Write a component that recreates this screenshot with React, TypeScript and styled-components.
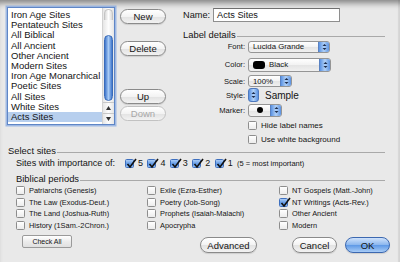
import React from 'react';
import styled, { createGlobalStyle } from 'styled-components';

const GlobalStyle = createGlobalStyle`
  html, body { margin: 0; padding: 0; background: #e9e9e9; }
  body { font-family: "Liberation Sans", Arial, sans-serif; color: #141414; }
`;

const Sheet = styled.div`
  width: 400px;
  height: 262px;
  overflow: hidden;
  background: #e9e9e9;
  box-shadow: inset 0 7px 6px -4px rgba(0, 0, 0, 0.45), inset -2px 0 0 #dcdcdc;
  display: flex;
  flex-direction: column;
`;

const TopSection = styled.div`
  display: flex;
  height: 145px;
  box-sizing: border-box;
  padding: 7px 0 0 7px;
`;

/* ---- site list ---- */
const ListBox = styled.div`
  width: 108px;
  height: 118px;
  box-sizing: border-box;
  border: 1px solid #5f86c6;
  box-shadow: 0 0 0 1.5px rgba(120, 160, 225, 0.65);
  background: #fff;
  display: flex;
`;

const ListItems = styled.div`
  flex: 1;
  padding-top: 2px;
`;

const ListItem = styled.div<{ $selected?: boolean }>`
  height: 10.2px;
  line-height: 10.2px;
  padding-left: 3px;
  font-size: 9.5px;
  white-space: nowrap;
  background: ${p => (p.$selected ? '#b7cfee' : 'transparent')};
`;

const ScrollBar = styled.div`
  width: 11px;
  border-left: 1px solid #d2d2d2;
  background: linear-gradient(to right, #e6e6e6, #fdfdfd 50%, #e6e6e6);
  display: flex;
  flex-direction: column;
`;

const TrackCap = styled.div`
  height: 10px;
  margin: 1px 1px 0;
  border-radius: 5px 5px 0 0;
  background: linear-gradient(to right, #d9d9d9, #fff 50%, #d9d9d9);
  border: 1px solid #c4c4c4;
  border-bottom: none;
`;

const Thumb = styled.div`
  height: 64px;
  margin: 15px 1px 0;
  border-radius: 5px;
  border: 1px solid #3a6bb8;
  background: linear-gradient(to right, #3f76cc, #a8cbf5 50%, #3f76cc);
`;

const ArrowBox = styled.div`
  height: 10px;
  display: flex;
  align-items: center;
  justify-content: center;
  border-top: 1px solid #c8c8c8;
`;

const Spacer = styled.div`
  flex: 1;
`;

/* ---- buttons ---- */
const ButtonColumn = styled.div`
  width: 46px;
  margin-left: 5px;
  display: flex;
  flex-direction: column;
`;

const PillButton = styled.button<{
  $w: number;
  $h?: number;
  $top?: number;
  $left?: number;
  $primary?: boolean;
}>`
  width: ${p => p.$w}px;
  height: ${p => p.$h ?? 15}px;
  margin-top: ${p => p.$top ?? 0}px;
  margin-left: ${p => p.$left ?? 0}px;
  padding: 0;
  border-radius: 9px;
  border: 1px solid ${p => (p.$primary ? '#3c68b0' : '#8a8a8a')};
  background: ${p =>
    p.$primary
      ? 'linear-gradient(#cfe2fb, #8ab6ee 50%, #5d98e6 51%, #a8ccf6)'
      : 'linear-gradient(#ffffff, #f3f3f3 50%, #e2e2e2 51%, #f2f2f2)'};
  font-family: "Liberation Sans", Arial, sans-serif;
  font-size: 9.5px;
  color: #141414;
  box-shadow: 0 1px 1px rgba(0, 0, 0, 0.12);
  &:disabled {
    color: #a8a8a8;
    border-color: #c2c2c2;
    box-shadow: none;
  }
`;

const SquareButton = styled.button`
  width: 50px;
  height: 13px;
  margin-left: 22px;
  padding: 0;
  border-radius: 2px;
  border: 1px solid #9a9a9a;
  background: linear-gradient(#ffffff, #ececec 50%, #e0e0e0);
  font-family: "Liberation Sans", Arial, sans-serif;
  font-size: 7px;
  color: #141414;
`;

/* ---- label details ---- */
const Details = styled.div`
  width: 202px;
  margin-left: 17px;
  display: flex;
  flex-direction: column;
`;

const NameRow = styled.div`
  display: flex;
  align-items: center;
  margin-top: 1px;
  font-size: 9.2px;
`;

const TextField = styled.div`
  width: 127px;
  height: 14px;
  box-sizing: border-box;
  margin-left: 3px;
  padding: 0 3px;
  border: 1px solid #8e8e8e;
  border-top-color: #6f6f6f;
  background: #fff;
  font-size: 9.2px;
  line-height: 12px;
`;

const Heading = styled.div<{ $indent?: number; $top?: number }>`
  display: flex;
  align-items: center;
  height: 10px;
  margin-top: ${p => p.$top ?? 0}px;
  padding-left: ${p => p.$indent ?? 0}px;
  font-size: 9.4px;
  white-space: nowrap;
  &::after {
    content: '';
    flex: 1;
    height: 1px;
    margin: 4px 0 0 1px;
    background: #a9a9a9;
  }
`;

const FormRow = styled.div<{ $h: number }>`
  display: flex;
  align-items: center;
  height: ${p => p.$h}px;
`;

const FormLabel = styled.div`
  width: 62px;
  margin-right: 3px;
  text-align: right;
  font-size: 7.6px;
`;

const Popup = styled.div<{ $w: number; $h: number }>`
  width: ${p => p.$w}px;
  height: ${p => p.$h}px;
  box-sizing: border-box;
  display: flex;
  align-items: center;
  border: 1px solid #959595;
  border-radius: 3px;
  background: linear-gradient(#ffffff, #f2f2f2 50%, #e4e4e4 51%, #f0f0f0);
  font-size: 7.8px;
  overflow: hidden;
`;

const PopupText = styled.div`
  flex: 1;
  display: flex;
  align-items: center;
  padding-left: 4px;
  white-space: nowrap;
`;

const Stepper = styled.div<{ $alone?: boolean }>`
  width: 10px;
  align-self: stretch;
  display: flex;
  align-items: center;
  justify-content: center;
  background: linear-gradient(to right, #5b93e3, #b1d1f7 50%, #5b93e3);
  border-left: 1px solid #5a82c2;
  ${p =>
    p.$alone &&
    `
    width: 9px;
    height: 12px;
    align-self: center;
    border: 1px solid #4d78bd;
    border-radius: 3px;
  `}
`;

const Swatch = styled.span`
  width: 12px;
  height: 8px;
  border-radius: 3px;
  background: #000;
  margin-right: 4px;
`;

const Dot = styled.span`
  width: 6px;
  height: 6px;
  border-radius: 50%;
  background: #000;
  margin-left: 4px;
`;

const SampleText = styled.span`
  margin-left: 6px;
  font-size: 10px;
`;

const CheckRow = styled.label`
  display: flex;
  align-items: center;
  font-size: 8px;
`;

const Box = styled.span<{ $checked?: boolean }>`
  position: relative;
  flex: none;
  width: 9px;
  height: 9px;
  box-sizing: border-box;
  border-radius: 1.5px;
  border: 1px solid ${p => (p.$checked ? '#3d6fbf' : '#8d8d8d')};
  background: ${p =>
    p.$checked
      ? 'linear-gradient(#a9cbf5, #5b95e4 60%, #8fbbf2)'
      : 'linear-gradient(#ffffff, #ececec)'};
  margin-right: 4px;
  svg {
    position: absolute;
    left: 0;
    top: -2px;
  }
`;

/* ---- select sites ---- */
const SelectSection = styled.div`
  display: flex;
  flex-direction: column;
  padding: 0 15px 0 8px;
`;

const ImportanceRow = styled.div`
  display: flex;
  align-items: center;
  height: 14px;
  margin-top: 1px;
  padding-left: 8px;
  font-size: 9.1px;
  white-space: nowrap;
`;

const ImportanceItems = styled.div`
  display: flex;
  align-items: center;
  margin-left: 10px;
`;

const ImportanceItem = styled.div`
  width: 22.4px;
  display: flex;
  align-items: center;
  font-size: 9px;
`;

const Hint = styled.span`
  font-size: 7.5px;
`;

const PeriodGrid = styled.div`
  display: grid;
  grid-template-columns: 131px 132px auto;
  grid-template-rows: repeat(4, 11.6px);
  grid-auto-flow: column;
  margin-top: 2px;
  padding-left: 16px;
`;

const PeriodItem = styled.label`
  display: flex;
  align-items: center;
  font-size: 7.4px;
  white-space: nowrap;
`;

const Footer = styled.div`
  display: flex;
  align-items: flex-start;
  margin-top: 4px;
  padding-right: 10px;
`;

const FooterRight = styled.div`
  display: flex;
  gap: 8px;
  margin-left: auto;
`;

const UpDown: React.FC<{ color?: string }> = ({ color = '#1a2a4a' }) => (
  <svg width="5" height="8" viewBox="0 0 5 8">
    <path d="M0.5 3 L2.5 1 L4.5 3 Z M0.5 5 L2.5 7 L4.5 5 Z" fill={color} />
  </svg>
);

const Arrow: React.FC<{ up?: boolean }> = ({ up }) => (
  <svg width="5" height="4" viewBox="0 0 5 4">
    <path d={up ? 'M0 4 L2.5 0 L5 4 Z' : 'M0 0 L2.5 4 L5 0 Z'} fill="#333" />
  </svg>
);

const Check: React.FC<{ checked?: boolean }> = ({ checked }) => (
  <Box $checked={checked}>
    {checked && (
      <svg width="11" height="11" viewBox="0 0 11 11">
        <path d="M1.5 6 L4 9 L10 1" stroke="#111" strokeWidth="1.6" fill="none" />
      </svg>
    )}
  </Box>
);

const sites = [
  'Iron Age Sites',
  'Pentateuch Sites',
  'All Biblical',
  'All Ancient',
  'Other Ancient',
  'Modern Sites',
  'Iron Age Monarchical',
  'Poetic Sites',
  'All Sites',
  'White Sites',
  'Acts Sites',
];

const periods: { name: string; checked?: boolean }[] = [
  { name: 'Patriarchs (Genesis)' },
  { name: 'The Law (Exodus-Deut.)' },
  { name: 'The Land (Joshua-Ruth)' },
  { name: 'History (1Sam.-2Chron.)' },
  { name: 'Exile (Ezra-Esther)' },
  { name: 'Poetry (Job-Song)' },
  { name: 'Prophets (Isaiah-Malachi)' },
  { name: 'Apocrypha' },
  { name: 'NT Gospels (Matt.-John)' },
  { name: 'NT Writings (Acts-Rev.)', checked: true },
  { name: 'Other Ancient' },
  { name: 'Modern' },
];

const App: React.FC = () => (
  <>
    <GlobalStyle />
    <Sheet>
      <TopSection>
        <ListBox>
          <ListItems>
            {sites.map(s => (
              <ListItem key={s} $selected={s === 'Acts Sites'}>
                {s}
              </ListItem>
            ))}
          </ListItems>
          <ScrollBar>
            <TrackCap />
            <Thumb />
            <Spacer />
            <ArrowBox>
              <Arrow up />
            </ArrowBox>
            <ArrowBox>
              <Arrow />
            </ArrowBox>
          </ScrollBar>
        </ListBox>

        <ButtonColumn>
          <PillButton $w={46} $top={2}>New</PillButton>
          <PillButton $w={46} $top={17}>Delete</PillButton>
          <PillButton $w={46} $top={33}>Up</PillButton>
          <PillButton $w={46} $top={2} disabled>
            Down
          </PillButton>
        </ButtonColumn>

        <Details>
          <NameRow>
            Name:
            <TextField>Acts Sites</TextField>
          </NameRow>
          <Heading $top={7}>Label details</Heading>
          <FormRow $h={16}>
            <FormLabel>Font:</FormLabel>
            <Popup $w={82} $h={12}>
              <PopupText>Lucida Grande</PopupText>
              <Stepper>
                <UpDown />
              </Stepper>
            </Popup>
          </FormRow>
          <FormRow $h={20}>
            <FormLabel>Color:</FormLabel>
            <Popup $w={83} $h={14}>
              <PopupText>
                <Swatch />
                Black
              </PopupText>
              <Stepper>
                <UpDown />
              </Stepper>
            </Popup>
          </FormRow>
          <FormRow $h={13}>
            <FormLabel>Scale:</FormLabel>
            <Popup $w={44} $h={12}>
              <PopupText>100%</PopupText>
              <Stepper>
                <UpDown />
              </Stepper>
            </Popup>
          </FormRow>
          <FormRow $h={16}>
            <FormLabel>Style:</FormLabel>
            <Stepper $alone>
              <UpDown />
            </Stepper>
            <SampleText>Sample</SampleText>
          </FormRow>
          <FormRow $h={14}>
            <FormLabel>Marker:</FormLabel>
            <Popup $w={34} $h={13}>
              <PopupText>
                <Dot />
              </PopupText>
              <Stepper>
                <UpDown />
              </Stepper>
            </Popup>
          </FormRow>
          <FormRow $h={16}>
            <FormLabel />
            <CheckRow>
              <Check />
              Hide label names
            </CheckRow>
          </FormRow>
          <FormRow $h={12}>
            <FormLabel />
            <CheckRow>
              <Check />
              Use white background
            </CheckRow>
          </FormRow>
        </Details>
      </TopSection>

      <SelectSection>
        <Heading>Select sites</Heading>
        <ImportanceRow>
          Sites with importance of:
          <ImportanceItems>
            {[5, 4, 3, 2, 1].map(n => (
              <ImportanceItem key={n}>
                <Check checked />
                {n}
              </ImportanceItem>
            ))}
            <Hint>(5 = most important)</Hint>
          </ImportanceItems>
        </ImportanceRow>
        <Heading $indent={8} $top={3}>
          Biblical periods
        </Heading>
      </SelectSection>

      <PeriodGrid>
        {periods.map(p => (
          <PeriodItem key={p.name}>
            <Check checked={p.checked} />
            {p.name}
          </PeriodItem>
        ))}
      </PeriodGrid>

      <Footer>
        <SquareButton>Check All</SquareButton>
        <FooterRight>
          <PillButton $w={57} $h={16} $top={2}>
            Advanced
          </PillButton>
          <PillButton $w={45} $h={16} $top={2} $left={27}>
            Cancel
          </PillButton>
          <PillButton $w={45} $h={16} $top={2} $primary>
            OK
          </PillButton>
        </FooterRight>
      </Footer>
    </Sheet>
  </>
);

export default App;
